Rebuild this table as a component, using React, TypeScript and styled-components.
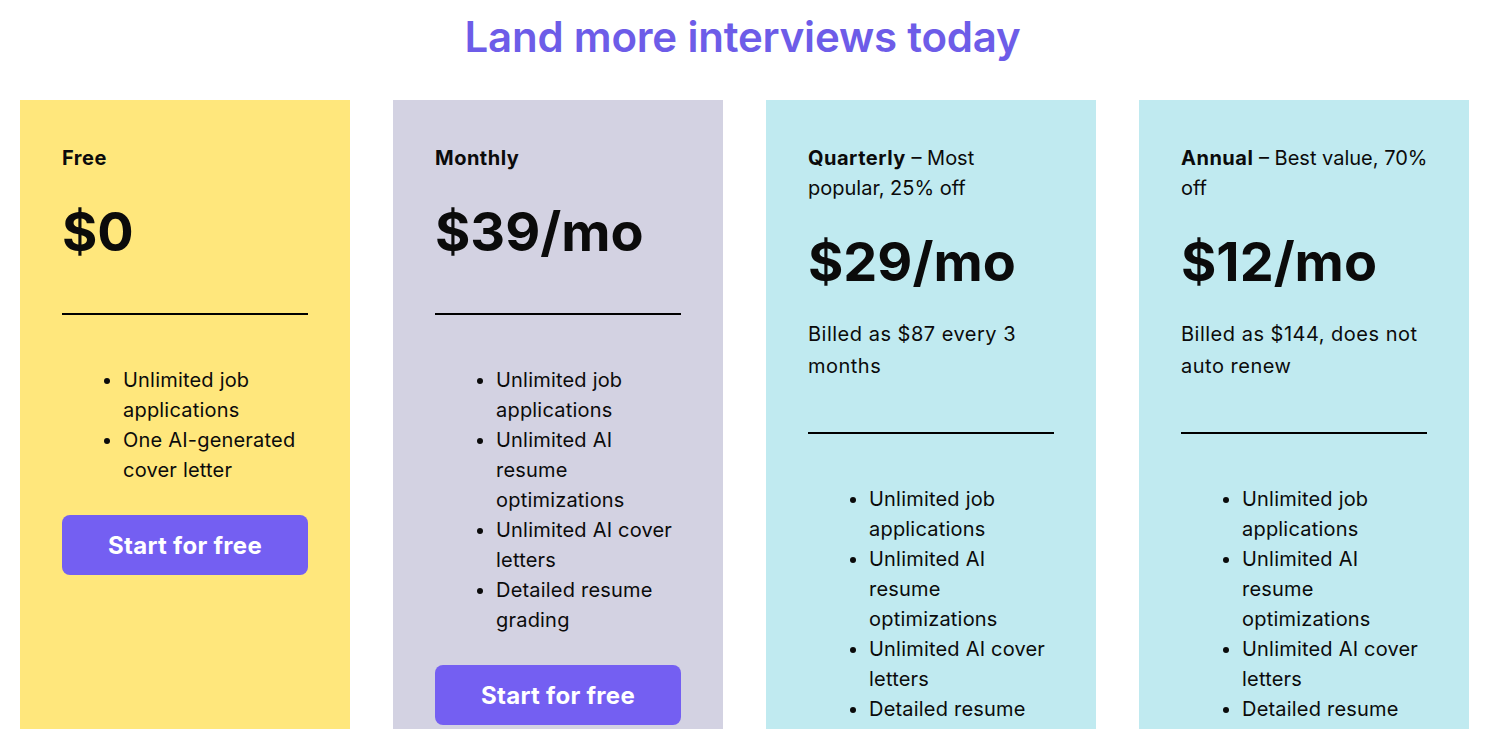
import React from "react";
import styled, { createGlobalStyle } from "styled-components";

const Global = createGlobalStyle`
  html, body { margin: 0; padding: 0; overflow: hidden; background: #ffffff; }
  body { font-family: Inter, "Noto Sans", sans-serif; color: #0b0b0b; }
  * { box-sizing: border-box; }
`;

const Page = styled.div`
  display: flex;
  flex-direction: column;
  align-items: stretch;
  padding-top: 12px;
`;

const Title = styled.h1`
  margin: 0 0 38px;
  padding-right: 10px;
  text-align: center;
  font-size: 42px;
  line-height: 50px;
  font-weight: 600;
  color: #6d5ce8;
  letter-spacing: -0.2px;
`;

const Grid = styled.div`
  display: grid;
  grid-template-columns: repeat(4, 330px);
  column-gap: 43px;
  padding: 0 20px;
  align-items: stretch;
`;

const Card = styled.div<{ $bg: string }>`
  background: ${(p) => p.$bg};
  padding: 41px 42px 40px;
  display: flex;
  flex-direction: column;
  min-height: 900px;
`;

const PlanName = styled.div`
  padding-top: 2px;
  margin-right: -4px;
  font-size: 20px;
  line-height: 30px;
  font-weight: 400;
  strong { font-weight: 700; letter-spacing: 0.5px; }
`;

const Price = styled.div`
  margin-top: 25px;
  font-size: 54px;
  line-height: 67px;
  font-weight: 700;
`;

const Billed = styled.div`
  margin: 23px 0 2px;
  font-size: 20px;
  line-height: 32px;
  font-weight: 400;
  letter-spacing: 0.5px;
`;

const Divider = styled.hr`
  margin: 48px 0 0;
  border: none;
  height: 2px;
  background: #000;
`;

const List = styled.ul`
  margin: 50px 0 0;
  padding: 0 0 0 61px;
  font-size: 20px;
  line-height: 30px;
  font-weight: 400;
  letter-spacing: 0.2px;
`;

const Button = styled.button`
  margin-top: 30px;
  height: 60px;
  width: 100%;
  border: none;
  border-radius: 8px;
  background: #745ff2;
  color: #fff;
  font-family: inherit;
  font-size: 24px;
  font-weight: 700;
  letter-spacing: 0.3px;
  cursor: pointer;
`;

type Plan = {
  name: string;
  tag?: string;
  price: string;
  billed?: string;
  bg: string;
  features: string[];
};

const allFeatures = [
  "Unlimited job applications",
  "Unlimited AI resume optimizations",
  "Unlimited AI cover letters",
  "Detailed resume grading",
];

const plans: Plan[] = [
  {
    name: "Free",
    price: "$0",
    bg: "#ffe77c",
    features: ["Unlimited job applications", "One AI-generated cover letter"],
  },
  { name: "Monthly", price: "$39/mo", bg: "#d3d2e2", features: allFeatures },
  {
    name: "Quarterly",
    tag: "Most popular,\u00a025% off",
    price: "$29/mo",
    billed: "Billed as $87 every 3 months",
    bg: "#c0eaf0",
    features: allFeatures,
  },
  {
    name: "Annual",
    tag: "Best value, 70% off",
    price: "$12/mo",
    billed: "Billed as $144, does not auto renew",
    bg: "#c0eaf0",
    features: allFeatures,
  },
];

export default function App() {
  return (
    <Page>
      <Global />
      <Title>Land more interviews today</Title>
      <Grid>
        {plans.map((p) => (
          <Card key={p.name} $bg={p.bg}>
            <PlanName>
              <strong>{p.name}</strong>
              {p.tag ? ` – ${p.tag}` : ""}
            </PlanName>
            <Price>{p.price}</Price>
            {p.billed && <Billed>{p.billed}</Billed>}
            <Divider />
            <List>
              {p.features.map((f) => (
                <li key={f}>{f}</li>
              ))}
            </List>
            <Button>Start for free</Button>
          </Card>
        ))}
      </Grid>
    </Page>
  );
}
